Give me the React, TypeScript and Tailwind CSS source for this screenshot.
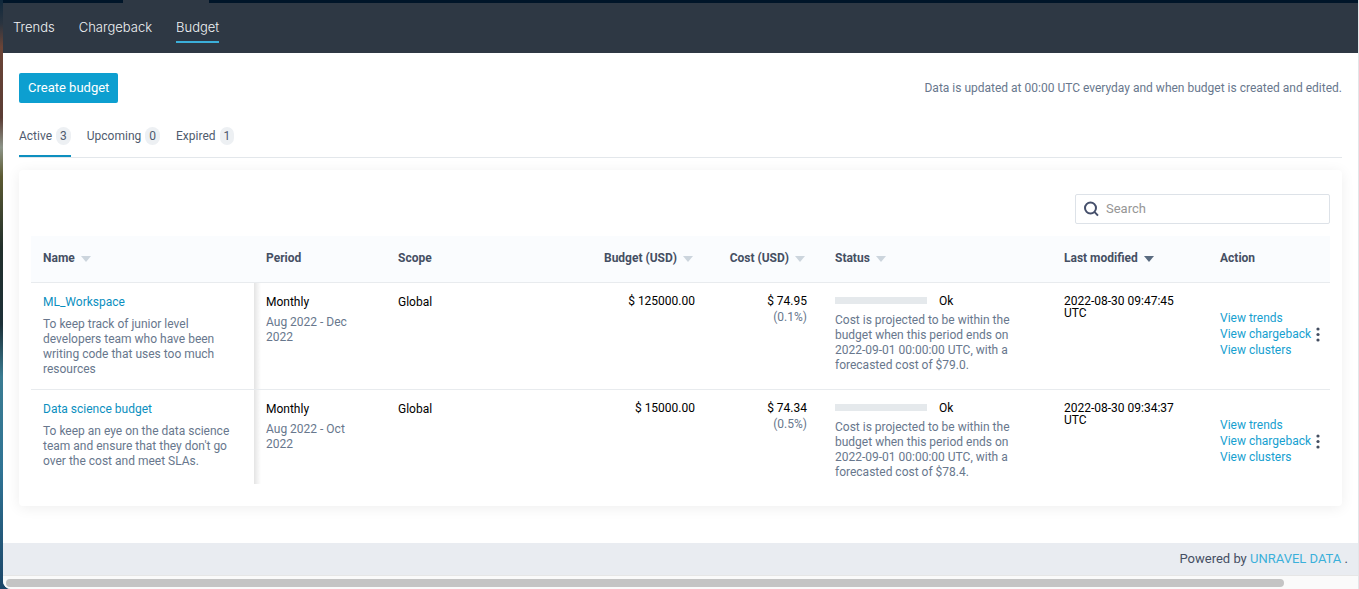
import React from 'react';

interface Budget {
  name: string;
  description: string;
  period: string;
  dates: string;
  scope: string;
  budget: string;
  cost: string;
  percent: string;
  status: string;
  statusText: string;
  modified: string;
}

const NAV_ITEMS = ['Trends', 'Chargeback', 'Budget'];

const TABS = [
  { label: 'Active', count: 3 },
  { label: 'Upcoming', count: 0 },
  { label: 'Expired', count: 1 },
];

const ACTIONS = ['View trends', 'View chargeback', 'View clusters'];

const BUDGETS: Budget[] = [
  {
    name: 'ML_Workspace',
    description: 'To keep track of junior level developers team who have been writing code that uses too much resources',
    period: 'Monthly',
    dates: 'Aug 2022 - Dec 2022',
    scope: 'Global',
    budget: '$ 125000.00',
    cost: '$ 74.95',
    percent: '(0.1%)',
    status: 'Ok',
    statusText: 'Cost is projected to be within the budget when this period ends on 2022-09-01 00:00:00 UTC, with a forecasted cost of $79.0.',
    modified: '2022-08-30 09:47:45 UTC',
  },
  {
    name: 'Data science budget',
    description: "To keep an eye on the data science team and ensure that they don't go over the cost and meet SLAs.",
    period: 'Monthly',
    dates: 'Aug 2022 - Oct 2022',
    scope: 'Global',
    budget: '$ 15000.00',
    cost: '$ 74.34',
    percent: '(0.5%)',
    status: 'Ok',
    statusText: 'Cost is projected to be within the budget when this period ends on 2022-09-01 00:00:00 UTC, with a forecasted cost of $78.4.',
    modified: '2022-08-30 09:34:37 UTC',
  },
];

const SortHeader: React.FC<{ label: string; active?: boolean }> = ({ label, active }) => (
  <button className="inline-flex items-center gap-1.5 font-bold">
    {label}
    <svg viewBox="0 0 10 6" className={`w-2.5 h-1.5 ${active ? 'fill-[#5a6b80]' : 'fill-[#ccd5dd]'}`}>
      <path d="M0 0h10L5 6z" />
    </svg>
  </button>
);

const TopNav = () => (
  <header>
    <div className="h-[3px] bg-[#001529]">
      <div className="ml-[120px] w-[86px] h-full bg-[#2e3844]" />
    </div>
    <nav className="flex gap-6 h-[50px] px-2.5 pt-3 bg-[#2e3844] font-['Inter',sans-serif] font-light text-[13px] text-[#f1f3f5]">
      {NAV_ITEMS.map((item) => (
        <a
          key={item}
          href="#"
          className={`h-7 leading-6 border-b-2 ${item === 'Budget' ? 'border-[#3bafda]' : 'border-transparent'}`}
        >
          {item}
        </a>
      ))}
    </nav>
  </header>
);

const BudgetRow: React.FC<{ row: Budget }> = ({ row }) => (
  <tr className="align-top border-b border-[#e8ebee] last:border-b-0">
    <td className="px-3 pt-3 pb-3">
      <a href="#" className="block text-[#0b8fc0]">{row.name}</a>
      <p className="mt-[7px] text-[#68778d]">{row.description}</p>
    </td>
    <td className="pl-3 pr-6 pt-3 pb-1 bg-[linear-gradient(to_right,#e4e4e4,#ffffff_7px)]">
      <p>{row.period}</p>
      <p className="mt-[5px] text-[#68778d]">{row.dates}</p>
    </td>
    <td className="px-3 pt-3 pb-1">{row.scope}</td>
    <td className="px-3 pt-3 pb-1 text-right leading-3">{row.budget}</td>
    <td className="pl-3 pr-4 pt-3 pb-1 text-right leading-3">
      <p>{row.cost}</p>
      <p className="mt-1 text-[#68778d]">{row.percent}</p>
    </td>
    <td className="px-3 pt-3 pb-1">
      <div className="flex items-center gap-3 leading-3">
        <div className="w-[92px] h-[7px] bg-[#e5e9ec]" />
        <span>{row.status}</span>
      </div>
      <p className="mt-1.5 w-[184px] text-[#68778d]">{row.statusText}</p>
    </td>
    <td className="pl-3 pr-6 pt-3 pb-1 leading-3">{row.modified}</td>
    <td className="pl-3 pr-2 pt-[27px] pb-1">
      <div className="flex items-center justify-between">
        <div className="flex flex-col leading-4 text-[#16a0d0] whitespace-nowrap">
          {ACTIONS.map((action) => (
            <a key={action} href="#">{action}</a>
          ))}
        </div>
        <button aria-label="More actions">
          <svg viewBox="0 0 8 16" className="w-2 h-4 fill-[#434d60]">
            <circle cx="4" cy="3" r="1.6" />
            <circle cx="4" cy="8.5" r="1.6" />
            <circle cx="4" cy="14" r="1.6" />
          </svg>
        </button>
      </div>
    </td>
  </tr>
);

const BudgetTable = () => (
  <table className="w-full table-fixed border-collapse leading-[15px] text-black">
    <colgroup>
      <col className="w-[223px]" />
      <col className="w-[132px]" />
      <col />
      <col className="w-[130px]" />
      <col className="w-[116px]" />
      <col className="w-[229px]" />
      <col className="w-[156px]" />
      <col className="w-[122px]" />
    </colgroup>
    <thead>
      <tr className="h-[46px] bg-[#fafcfe] text-left text-[#454f63] border-b border-[#e8ebee]">
        <th className="px-3"><SortHeader label="Name" /></th>
        <th className="px-3">Period</th>
        <th className="px-3">Scope</th>
        <th className="pr-3.5 text-right whitespace-nowrap"><SortHeader label="Budget (USD)" /></th>
        <th className="pr-[18px] text-right whitespace-nowrap"><SortHeader label="Cost (USD)" /></th>
        <th className="px-3"><SortHeader label="Status" /></th>
        <th className="px-3"><SortHeader label="Last modified" active /></th>
        <th className="px-3">Action</th>
      </tr>
    </thead>
    <tbody>
      {BUDGETS.map((row) => (
        <BudgetRow key={row.name} row={row} />
      ))}
    </tbody>
  </table>
);

export default function App() {
  return (
    <div className="min-h-screen pl-[3px] bg-[linear-gradient(to_bottom,#10283c,#2a3440_4%,#6b4436_8%,#5a3c34_20%,#8c9488_25%,#5c5a32_30%,#22302c_42%,#1c3038_55%,#3a7c92_64%,#2f7394_80%,#1c4668)] font-['Roboto',sans-serif] text-[12px]">
      <div className="min-h-screen flex flex-col bg-white border-r border-[#e3e5e8] rounded-bl-lg overflow-hidden">
        <TopNav />
        <main className="px-4 pt-5 pb-[37px]">
          <div className="flex items-center justify-between">
            <button className="h-[30px] px-[9px] rounded-xs bg-[#0d9fd0] text-[13px] text-white">Create budget</button>
            <p className="text-[#68778d]">Data is updated at 00:00 UTC everyday and when budget is created and edited.</p>
          </div>

          <div className="flex gap-4 mt-6 border-b border-[#e3e7eb] text-[#4f5b6e]">
            {TABS.map((tab) => (
              <button
                key={tab.label}
                className={`flex items-start gap-1 h-[30px] border-b-2 leading-[18px] ${tab.label === 'Active' ? 'border-[#0d8fbf]' : 'border-transparent'}`}
              >
                {tab.label}
                <span className="px-1 rounded-full bg-[#edf0f3]">{tab.count}</span>
              </button>
            ))}
          </div>

          <section className="mt-3 px-3 pt-6 pb-[22px] rounded-sm bg-white shadow-[0_2px_14px_rgba(0,0,0,0.07)]">
            <label className="flex items-center gap-1.5 w-[255px] h-[30px] ml-auto mb-3 px-2 border border-[#dde2e8] rounded-xs">
              <svg viewBox="0 0 16 16" className="w-4 h-4 fill-none stroke-[#454f6b] stroke-2">
                <circle cx="6.5" cy="7" r="5.5" />
                <path d="M10.4 10.9L14 14.6" />
              </svg>
              <input type="text" aria-label="Search" placeholder="Search" className="flex-1 min-w-0 text-[13px] outline-none placeholder:text-[#969696]" />
            </label>
            <BudgetTable />
          </section>
        </main>

        <footer className="h-8 pr-2.5 leading-8 bg-[#e9ecf1] text-right text-[13px] text-[#454f63]">
          Powered by <a href="#" className="text-[#3bb0da]">UNRAVEL DATA</a> .
        </footer>
        <div className="flex-1 pt-[3px] pb-0.5 pl-[3px] pr-[74px] bg-[#fafafa] border-t border-[#e6e6e6]">
          <div className="h-2 rounded-full bg-[#c4c4c4]" />
        </div>
      </div>
    </div>
  );
}
